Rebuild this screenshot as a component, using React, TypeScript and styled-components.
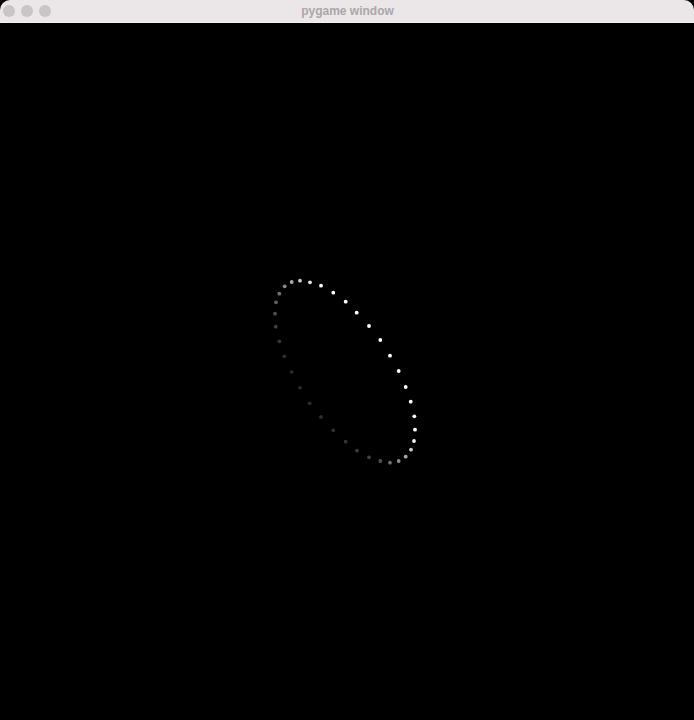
import React from "react";
import styled, { createGlobalStyle } from "styled-components";

const GlobalStyle = createGlobalStyle`
  html, body {
    margin: 0;
    padding: 0;
    background: #000;
  }
  #root {
    width: 694px;
    height: 720px;
  }
`;

const Window = styled.div`
  width: 694px;
  height: 720px;
  display: flex;
  flex-direction: column;
  border-radius: 10px;
  overflow: hidden;
  background: #000;
`;

const TitleBar = styled.div`
  position: relative;
  height: 22px;
  flex: 0 0 22px;
  display: flex;
  align-items: center;
  justify-content: center;
  background: #ebe6e8;
  border-bottom: 1px solid #f4f1f2;
`;

const Lights = styled.div`
  position: absolute;
  left: 3px;
  top: 5px;
  display: flex;
  gap: 6px;
`;

const Light = styled.span`
  width: 12px;
  height: 12px;
  border-radius: 50%;
  background: #c9c5c7;
`;

const Title = styled.span`
  font-family: "Liberation Sans", Arial, sans-serif;
  font-weight: 700;
  font-size: 12px;
  color: #aaa6a8;
  padding-left: 1px;
`;

const Canvas = styled.div`
  flex: 1;
  background: #000;
`;

const Stage = styled.svg`
  display: block;
`;

const dots: [number, number, number][] = [
  [300, 280.7, 200],
  [310, 282.3, 225],
  [321, 285.7, 250],
  [333.3, 292.7, 255],
  [345.7, 301.7, 255],
  [356.7, 312.7, 255],
  [369, 326, 255],
  [380.3, 340, 255],
  [390, 355.7, 255],
  [398.7, 371, 255],
  [405.7, 387, 255],
  [410.7, 401.7, 255],
  [414.3, 416.3, 255],
  [415, 429.7, 255],
  [414, 441, 240],
  [411, 449.7, 205],
  [405.7, 456.7, 170],
  [398.7, 461, 140],
  [390, 462.7, 110],
  [380.3, 461, 82],
  [369, 457.3, 66],
  [357, 450.7, 58],
  [345.7, 441.7, 52],
  [333.3, 430.3, 48],
  [321, 417, 45],
  [309.7, 403.3, 42],
  [300, 387.7, 40],
  [291.7, 372, 40],
  [284.3, 356.3, 45],
  [279.3, 341.3, 55],
  [275.7, 326.7, 65],
  [275, 313.7, 78],
  [276, 302.3, 95],
  [279.3, 293.7, 115],
  [284.7, 286.3, 140],
  [291.7, 282, 170],
];

export default function App() {
  return (
    <>
      <GlobalStyle />
      <Window>
        <TitleBar>
          <Lights>
            <Light />
            <Light />
            <Light />
          </Lights>
          <Title>pygame window</Title>
        </TitleBar>
        <Canvas>
          <Stage width="694" height="697" viewBox="0 23 694 697">
            {dots.map(([x, y, b], i) => (
              <circle
                key={i}
                cx={x}
                cy={y}
                r={1.9}
                fill={`rgb(${b},${b},${b})`}
              />
            ))}
          </Stage>
        </Canvas>
      </Window>
    </>
  );
}
